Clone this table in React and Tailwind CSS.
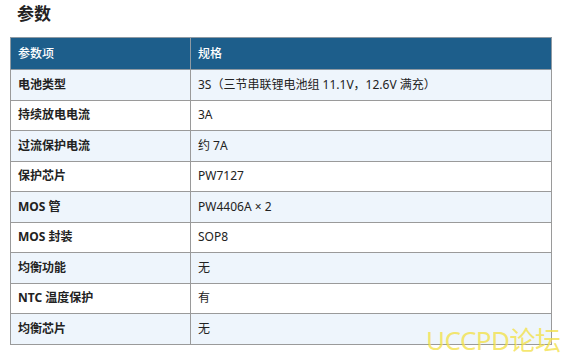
const rows = [
  ["电池类型", "3S（三节串联锂电池组 11.1V，12.6V 满充）"],
  ["持续放电电流", "3A"],
  ["过流保护电流", "约 7A"],
  ["保护芯片", "PW7127"],
  ["MOS 管", "PW4406A × 2"],
  ["MOS 封装", "SOP8"],
  ["均衡功能", "无"],
  ["NTC 温度保护", "有"],
  ["均衡芯片", "无"],
];

export default function App() {
  return (
    <div
      className="relative h-[357px] w-[566px] overflow-hidden bg-white text-[#222]"
      style={{ fontFamily: '"Noto Sans", "Noto Sans CJK SC", sans-serif' }}
    >
      <h2 className="pl-[17px] pt-[1px] text-[17px] font-bold leading-[26px] text-[#222]">参数</h2>
      <table className="ml-[10px] mt-[10px] w-[542px] border-collapse text-[12px] leading-none">
        <thead>
          <tr className="h-[32px] bg-[#1d5e8b] text-white">
            <th className="w-[180px] border border-[#8f9aa3] pl-[7px] text-left font-medium">参数项</th>
            <th className="border border-[#8f9aa3] pl-[7px] text-left font-medium">规格</th>
          </tr>
        </thead>
        <tbody>
          {rows.map(([k, v], i) => (
            <tr key={k} className={i % 2 === 0 ? "h-[30.5px] bg-[#eef5fc]" : "h-[30.5px] bg-white"}>
              <td className="border border-[#9a9a9a] pl-[7px] font-bold">{k}</td>
              <td className="border border-[#9a9a9a] pl-[7px]">{v}</td>
            </tr>
          ))}
        </tbody>
      </table>
      <div className="absolute left-[426px] top-[327px] text-[26px] leading-none tracking-[-0.5px] text-[#f3e14a]/80">
        UCCPD论坛
      </div>
    </div>
  );
}
